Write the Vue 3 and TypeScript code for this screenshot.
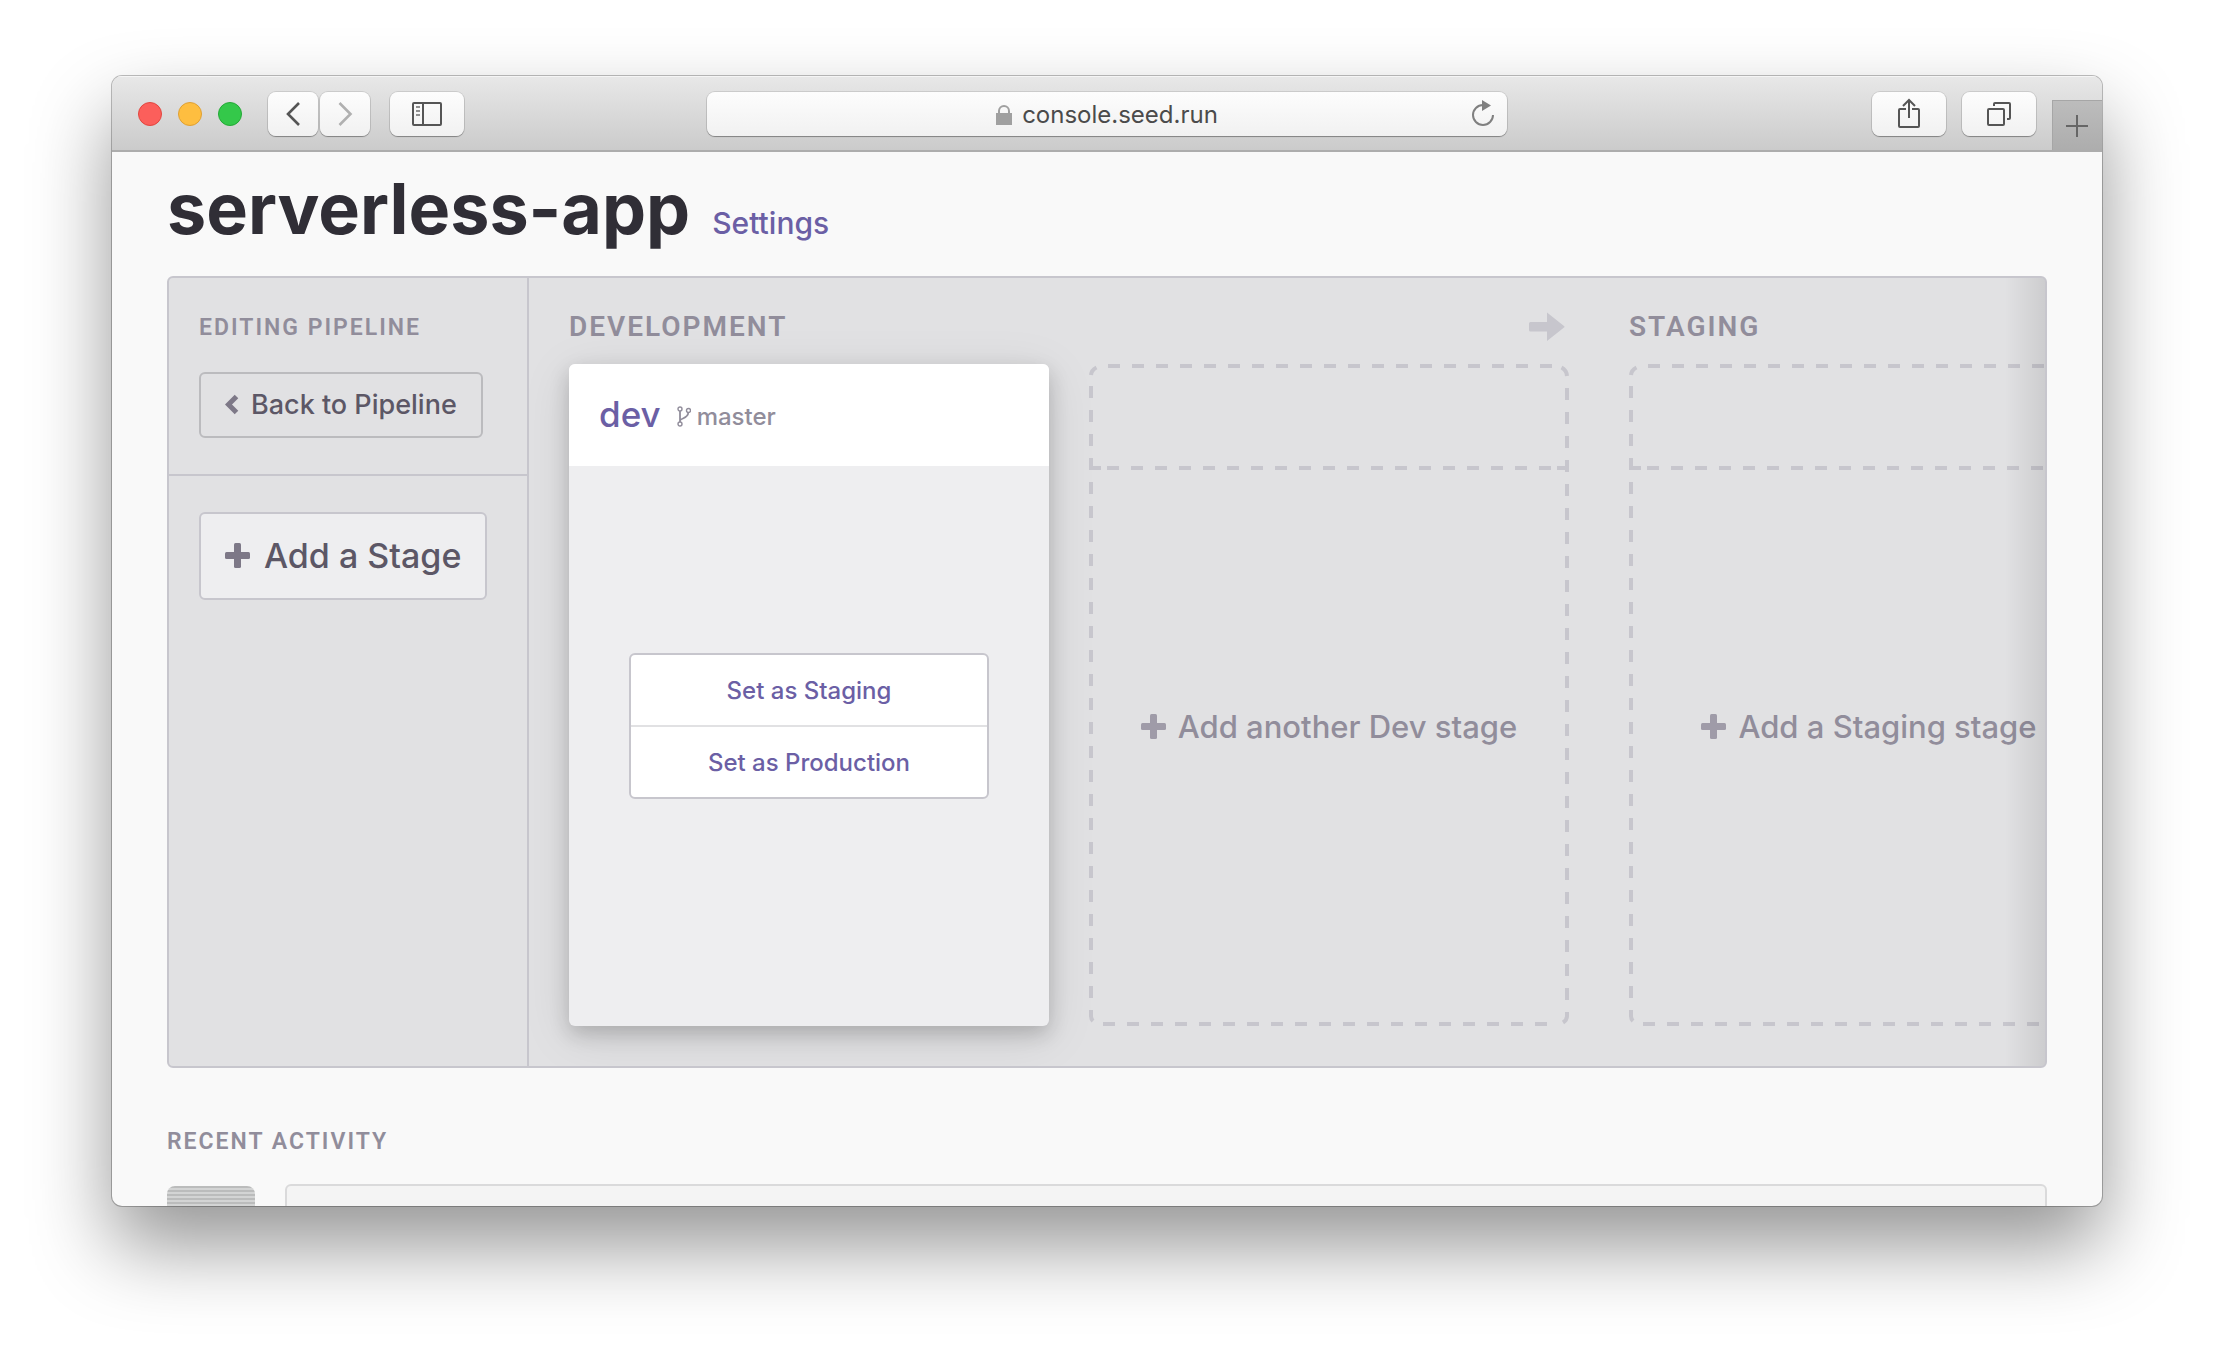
<script setup lang="ts">
interface Slot {
  label: string
}

interface Column {
  name: string
  hasNext: boolean
  stages: { name: string; branch: string; actions: string[] }[]
  slot: Slot
}

const columns: Column[] = [
  {
    name: 'DEVELOPMENT',
    hasNext: true,
    stages: [{ name: 'dev', branch: 'master', actions: ['Set as Staging', 'Set as Production'] }],
    slot: { label: 'Add another Dev stage' },
  },
  {
    name: 'STAGING',
    hasNext: false,
    stages: [],
    slot: { label: 'Add a Staging stage' },
  },
]
</script>

<template>
  <div class="desktop">
    <div class="window">
      <header class="toolbar">
        <div class="toolbar-left">
          <div class="lights">
            <span class="light red"></span>
            <span class="light yellow"></span>
            <span class="light green"></span>
          </div>
          <div class="nav">
            <button class="tool narrow" type="button" aria-label="Back">
              <svg width="50" height="44" viewBox="0 0 50 44"><path d="M31 11L20 22l11 11" fill="none" stroke="#555" stroke-width="2.6" /></svg>
            </button>
            <button class="tool narrow" type="button" aria-label="Forward">
              <svg width="50" height="44" viewBox="0 0 50 44"><path d="M19.500 11l11 11-11 11" fill="none" stroke="#b0b0b0" stroke-width="2.6" /></svg>
            </button>
          </div>
          <button class="tool" type="button" aria-label="Show sidebar">
            <svg width="74" height="44" viewBox="0 0 74 44" fill="none" stroke="#555" stroke-width="2">
              <rect x="23" y="11" width="28" height="22" rx="1" />
              <path d="M33 11v22" />
              <path d="M26 15h4M26 19h4M26 23h4" stroke="#909090" />
            </svg>
          </button>
        </div>

        <div class="address">
          <svg class="lock" width="16" height="20" viewBox="0 0 16 20">
            <path d="M3 9V6a5 5 0 0 1 10 0v3" fill="none" stroke="#a0a0a0" stroke-width="2" />
            <path d="M0 8h16v12H0z" fill="#a0a0a0" />
          </svg>
          <span>console.seed.run</span>
          <button class="reload" type="button" aria-label="Reload">
            <svg width="24" height="28" viewBox="0 0 24 28">
              <path d="M22 15A10 10 0 1 1 12 5" fill="none" stroke="#808080" stroke-width="2" />
              <path d="M11 0l9 5.500L11 11z" fill="#808080" />
            </svg>
          </button>
        </div>

        <div class="toolbar-right">
          <button class="tool" type="button" aria-label="Share">
            <svg width="74" height="44" viewBox="0 0 74 44" fill="none" stroke="#555" stroke-width="2">
              <path d="M34 17h-6a1 1 0 0 0-1 1v16a1 1 0 0 0 1 1h18a1 1 0 0 0 1-1V18a1 1 0 0 0-1-1h-6" />
              <path d="M37 26V8M31 14l6-6 6 6" />
            </svg>
          </button>
          <button class="tool" type="button" aria-label="Show all tabs">
            <svg width="74" height="44" viewBox="0 0 74 44" fill="none" stroke="#555" stroke-width="2">
              <rect x="26" y="17" width="16" height="16" rx="1" />
              <path d="M32 14v-2a1 1 0 0 1 1-1h14a1 1 0 0 1 1 1v14a1 1 0 0 1-1 1h-2" />
            </svg>
          </button>
          <button class="new-tab" type="button" aria-label="New tab">
            <svg width="22" height="22" viewBox="0 0 22 22"><path d="M11 0v22M0 11h22" stroke="#666" stroke-width="2" /></svg>
          </button>
        </div>
      </header>

      <main class="page">
        <div class="title-row">
          <h1>serverless-app</h1>
          <a href="#settings">Settings</a>
        </div>

        <section class="pipeline">
          <aside class="side">
            <div class="side-block">
              <h2 class="label">EDITING PIPELINE</h2>
              <button class="back" type="button">
                <svg width="14" height="21" viewBox="0 0 14 21"><path d="M11.500 2.500l-8 8 8 8" fill="none" stroke="#7d7887" stroke-width="5" /></svg>
                Back to Pipeline
              </button>
            </div>
            <div class="side-block">
              <button class="add" type="button">
                <svg width="25" height="25" viewBox="0 0 25 25" fill="#7d7887"><rect x="9" width="7" height="25" rx="1.500" /><rect y="9" width="25" height="7" rx="1.500" /></svg>
                Add a Stage
              </button>
            </div>
          </aside>

          <div class="board">
            <div v-for="column in columns" :key="column.name" class="column">
              <div class="column-head">
                <h3>{{ column.name }}</h3>
                <svg v-if="column.hasNext" width="36" height="30" viewBox="0 0 36 30" fill="#c7c6cd">
                  <path d="M1.500 10H18V0.500L35 14a1 1 0 0 1 0 1.600L18 29V19.500H1.500A1.500 1.500 0 0 1 0 18v-6.500A1.500 1.500 0 0 1 1.500 10z" />
                </svg>
              </div>
              <div class="stages">
                <article v-for="stage in column.stages" :key="stage.name" class="card">
                  <div class="card-head">
                    <a class="stage-name" href="#dev">{{ stage.name }}</a>
                    <span class="branch">
                      <svg width="14" height="21" viewBox="0 0 14 21" fill="none" stroke="#918d9b">
                        <circle cx="3" cy="3" r="2" stroke-width="1.400" />
                        <circle cx="3" cy="18" r="2" stroke-width="1.400" />
                        <circle cx="11.500" cy="4.500" r="2" stroke-width="1.400" />
                        <path d="M3 5v11M3 14.500c1-2.500 8-2 8.300-8" stroke-width="1.800" />
                      </svg>
                      {{ stage.branch }}
                    </span>
                  </div>
                  <div class="card-body">
                    <div class="actions">
                      <button v-for="action in stage.actions" :key="action" type="button">{{ action }}</button>
                    </div>
                  </div>
                </article>

                <button class="slot" type="button">
                  <svg class="outline" viewBox="0 0 480 662" preserveAspectRatio="none" fill="none" stroke="#c7c6cd" stroke-width="4">
                    <g stroke-dasharray="12 12">
                      <path d="M19 2H466" />
                      <path d="M2 22V642" />
                      <path d="M478 24V642" />
                      <path d="M14 660H466" />
                      <path d="M18 104H466" />
                    </g>
                    <path d="M2 11Q2.500 6 7.500 3.500M472.500 3.500Q477.500 6 478 12M2 646v6q0 3 2 5M478 648v4q0 4-4 6.500M0 104h12M468 104h12" />
                  </svg>
                  <svg width="25" height="25" viewBox="0 0 25 25" fill="#9f9ba8"><rect x="9" width="7" height="25" rx="1.500" /><rect y="9" width="25" height="7" rx="1.500" /></svg>
                  {{ column.slot.label }}
                </button>
              </div>
            </div>
          </div>
        </section>

        <section class="activity">
          <h2 class="label">RECENT ACTIVITY</h2>
          <div class="entry">
            <div class="avatar"></div>
            <div class="entry-box"></div>
          </div>
        </section>
      </main>
    </div>
  </div>
</template>

<style>
body {
  margin: 0;
  background: #fff;
}
</style>

<style scoped>
* {
  box-sizing: border-box;
}

button {
  margin: 0;
  padding: 0;
  border: 0;
  background: none;
  font: inherit;
  color: inherit;
}

a {
  color: #6b5fa5;
  text-decoration: none;
}

h1,
h2,
h3 {
  margin: 0;
}

svg {
  display: block;
  flex: none;
}

.desktop {
  height: 100vh;
  padding: 76px 112px 148px;
  overflow: hidden;
  font-family: Inter, 'Liberation Sans', sans-serif;
}

.window {
  display: flex;
  flex-direction: column;
  height: 100%;
  border-radius: 10px;
  overflow: hidden;
  background: #f9f9f9;
  box-shadow: 0 0 0 1px rgba(0, 0, 0, 0.25), 0 40px 80px rgba(0, 0, 0, 0.42);
}

.toolbar {
  flex: none;
  display: grid;
  grid-template-columns: 1fr minmax(300px, 800px) 1fr;
  align-items: center;
  height: 76px;
  border-bottom: 2px solid #adadad;
  background: linear-gradient(#e8e8e8, #cbcbcb);
  box-shadow: inset 0 1px 0 #f5f5f5;
  padding-top: 2px;
}

.toolbar-left,
.toolbar-right {
  display: flex;
  align-items: center;
}

.toolbar-left {
  gap: 20px;
  padding-left: 26px;
}

.toolbar-right {
  align-self: stretch;
  justify-content: flex-end;
  gap: 16px;
}

.lights {
  display: flex;
  gap: 16px;
  margin-right: 6px;
}

.light {
  width: 24px;
  height: 24px;
  border-radius: 50%;
}

.red {
  background: #fc5f5b;
  border: 1px solid #e2463f;
}

.yellow {
  background: #febe40;
  border: 1px solid #dfa033;
}

.green {
  background: #34c84a;
  border: 1px solid #24a936;
}

.nav {
  display: flex;
  gap: 2px;
}

.tool,
.address {
  height: 44px;
  border-radius: 8px;
  background: linear-gradient(#fdfdfd, #f1f1f1);
  box-shadow: 0 0 0 1px rgba(0, 0, 0, 0.1), 0 1px 1px rgba(0, 0, 0, 0.3);
}

.tool {
  width: 74px;
}

.tool.narrow {
  width: 50px;
}

.address {
  position: relative;
  display: flex;
  align-items: center;
  justify-content: center;
  gap: 10px;
  padding-top: 2px;
  font-size: 24px;
  line-height: 42px;
  color: #4b4b4b;
}

.reload {
  position: absolute;
  top: 8px;
  right: 12px;
}

.new-tab {
  display: grid;
  place-items: center;
  align-self: flex-end;
  width: 50px;
  height: 50px;
  padding: 1px 1px 0 0;
  border-top: 1px solid #a6a6a6;
  border-left: 1px solid #a6a6a6;
  background: linear-gradient(#bcbcbc, #adadad);
}

.page {
  flex: 1;
  min-height: 0;
  overflow: hidden;
  padding: 15px 55px 0;
}

.title-row {
  display: flex;
  align-items: baseline;
  gap: 22px;
  margin-bottom: 25px;
  line-height: 84px;
}

.title-row h1 {
  font-size: 70px;
  font-weight: 700;
  line-height: 84px;
  color: #302e36;
}

.title-row a {
  font-size: 30px;
  font-weight: 500;
  line-height: 36px;
}

.label,
.column-head h3 {
  font-family: Roboto, 'Liberation Sans', sans-serif;
  font-weight: 600;
  letter-spacing: 2px;
  color: #918d9b;
}

.label {
  font-size: 23px;
  line-height: 28px;
}

.pipeline {
  position: relative;
  display: flex;
  border: 2px solid #c7c6cd;
  border-radius: 6px;
  overflow: hidden;
  background: #e1e1e3;
}

.pipeline::after {
  content: '';
  position: absolute;
  top: 0;
  right: 0;
  bottom: 0;
  width: 40px;
  background: linear-gradient(to right, rgba(0, 0, 0, 0), rgba(0, 0, 0, 0.09));
}

.side {
  flex: none;
  width: 360px;
  border-right: 2px solid #c7c6cd;
}

.side-block {
  padding: 36px 30px;
}

.side-block + .side-block {
  border-top: 2px solid #c7c6cd;
}

.back,
.add {
  display: flex;
  align-items: center;
  padding: 0 24px 2px;
  border-radius: 6px;
  font-weight: 500;
  color: #5c5766;
  white-space: nowrap;
}

.back {
  gap: 12px;
  height: 66px;
  margin-top: 30px;
  border: 2px solid #bbbbbe;
  font-size: 27px;
}

.add {
  gap: 14px;
  height: 88px;
  border: 2px solid #c7c6cd;
  background: #eeeef0;
  font-size: 34px;
}

.board {
  flex: 1;
  min-width: 0;
  display: flex;
  gap: 60px;
  padding: 33px 0 40px 40px;
  overflow: hidden;
}

.column {
  flex: none;
}

.column-head {
  display: flex;
  align-items: center;
  justify-content: space-between;
  height: 32px;
  margin-bottom: 21px;
  padding-right: 4px;
}

.column-head h3 {
  font-size: 28px;
  line-height: 32px;
}

.stages {
  display: flex;
  gap: 40px;
}

.card,
.slot {
  width: 480px;
  height: 662px;
  border-radius: 6px;
}

.card {
  display: flex;
  flex-direction: column;
  overflow: hidden;
  background: #eeeef0;
  box-shadow: 0 10px 50px rgba(0, 0, 0, 0.1), 0 8px 20px rgba(0, 0, 0, 0.18);
}

.card-head {
  display: flex;
  align-items: baseline;
  gap: 16px;
  height: 102px;
  padding: 26px 30px;
  background: #fff;
}

.stage-name {
  font-size: 35px;
  font-weight: 500;
  line-height: 48px;
}

.branch {
  display: flex;
  align-items: center;
  gap: 6px;
  font-size: 24px;
  font-weight: 500;
  line-height: 28px;
  color: #918d9b;
}

.card-body {
  flex: 1;
  display: grid;
  place-items: center;
  padding: 0 60px 40px;
}

.actions {
  width: 100%;
  border: 2px solid #c7c6cd;
  border-radius: 6px;
  overflow: hidden;
  background: #fff;
}

.actions button {
  display: block;
  width: 100%;
  height: 70px;
  font-size: 24px;
  font-weight: 500;
  color: #6b5fa5;
}

.actions button + button {
  height: 72px;
  border-top: 2px solid #e1e1e3;
}

.slot {
  position: relative;
  display: flex;
  align-items: center;
  justify-content: center;
  gap: 12px;
  padding-top: 62px;
  font-size: 31px;
  font-weight: 500;
  color: #918d9b;
  white-space: nowrap;
}

.outline {
  position: absolute;
  inset: 0;
  width: 100%;
  height: 100%;
}

.activity {
  margin-top: 60px;
}

.entry {
  display: flex;
  gap: 30px;
  margin-top: 28px;
}

.avatar {
  flex: none;
  width: 88px;
  height: 88px;
  margin-top: 2px;
  border-radius: 8px;
  background: repeating-linear-gradient(#bbbcbc 0 2px, #d3d4d4 2px 4px);
}

.entry-box {
  flex: 1;
  height: 120px;
  border: 2px solid #dadadb;
  border-radius: 6px;
  background: #f4f4f4;
}
</style>
